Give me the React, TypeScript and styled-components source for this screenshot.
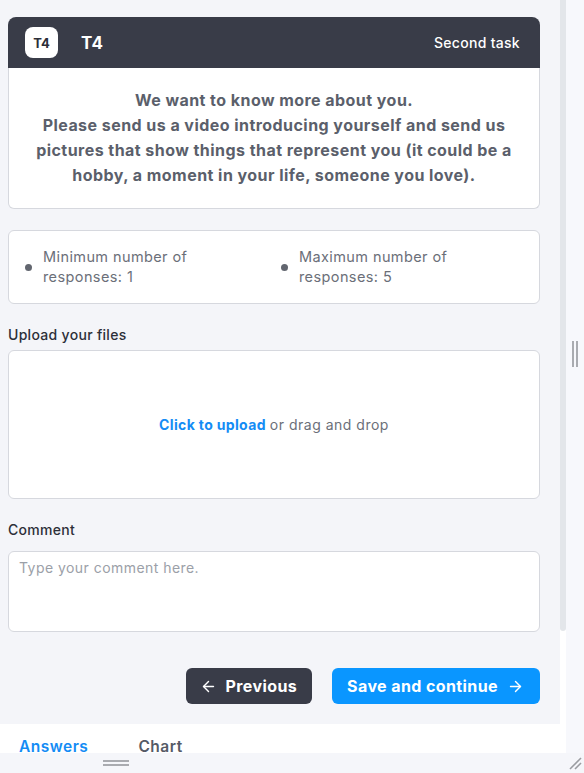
import React from "react";
import styled, { createGlobalStyle } from "styled-components";
import { ArrowLeft, ArrowRight } from "lucide-react";

const GlobalStyle = createGlobalStyle`
  html, body { margin: 0; padding: 0; }
  body {
    background: #f4f5f9;
    font-family: Inter, "Open Sans", "Noto Sans", sans-serif;
    color: #2c2f38;
  }
  * { box-sizing: border-box; }
`;

const Frame = styled.div`
  width: 584px;
  height: 773px;
  display: grid;
  grid-template-columns: 566px 18px;
  grid-template-rows: 753px 20px;
  overflow: hidden;
  background: #f4f5f9;
`;

const LeftPane = styled.div`
  display: flex;
  flex-direction: column;
  min-height: 0;
  overflow: hidden;
`;

const ScrollArea = styled.div`
  flex: 1;
  display: flex;
  min-height: 0;
  overflow: hidden;
`;

const Content = styled.div`
  width: 560px;
  padding: 17px 20px 0 8px;
  display: flex;
  flex-direction: column;
  background: #f4f5f9;
`;

const ScrollTrack = styled.div`
  width: 6px;
  background: #ffffff;
  display: flex;
  flex-direction: column;
`;

const ScrollThumb = styled.div`
  height: 631px;
  background: #e3e6ea;
  border-radius: 0 0 3px 3px;
`;

const Card = styled.section`
  display: flex;
  flex-direction: column;
`;

const CardHeader = styled.header`
  height: 51px;
  background: #393c48;
  border-radius: 8px 8px 0 0;
  display: flex;
  align-items: center;
  padding: 0 20px 0 17px;
`;

const Badge = styled.span`
  width: 33px;
  height: 31px;
  border-radius: 8px;
  background: #ffffff;
  color: #2b2e38;
  font-weight: 700;
  font-size: 13px;
  display: flex;
  align-items: center;
  justify-content: center;
`;

const HeaderTitle = styled.h2`
  margin: 0 0 0 23px;
  font-size: 17px;
  font-weight: 700;
  letter-spacing: 0.3px;
  color: #ffffff;
  flex: 1;
`;

const HeaderMeta = styled.span`
  font-size: 14px;
  font-weight: 500;
  letter-spacing: 0.3px;
  color: #ffffff;
`;

const CardBody = styled.div`
  background: #ffffff;
  border: 1px solid #d6d8de;
  border-top: none;
  border-radius: 0 0 6px 6px;
  padding: 20px 12px;
  text-align: center;
  font-size: 16px;
  line-height: 25px;
  letter-spacing: 0.45px;
  font-weight: 700;
  color: #5b5f6b;
  white-space: nowrap;
`;

const InfoBox = styled.div`
  margin-top: 21px;
  background: #ffffff;
  border: 1px solid #d6d8de;
  border-radius: 6px;
  padding: 16px 14px;
  display: grid;
  grid-template-columns: 256px 256px;
`;

const InfoItem = styled.div`
  display: flex;
  align-items: center;
  gap: 11px;
  padding-left: 2px;
`;

const Dot = styled.span`
  width: 7px;
  height: 7px;
  border-radius: 50%;
  background: #62666f;
  flex-shrink: 0;
`;

const InfoText = styled.span`
  font-size: 14.5px;
  line-height: 20px;
  letter-spacing: 0.4px;
  color: #6b6f79;
  max-width: 168px;
`;

const FieldLabel = styled.label<{ $top: number; $gap: number }>`
  display: block;
  margin-top: ${(p) => p.$top}px;
  margin-bottom: ${(p) => p.$gap}px;
  font-size: 14px;
  line-height: 20px;
  font-weight: 450;
  letter-spacing: 0.3px;
  color: #2c2f38;
`;

const DropZone = styled.div`
  height: 149px;
  background: #ffffff;
  border: 1px solid #d6d8de;
  border-radius: 6px;
  display: flex;
  align-items: center;
  justify-content: center;
  font-size: 14px;
  letter-spacing: 0.5px;
  color: #6b6f79;
`;

const UploadLink = styled.span`
  color: #148cf5;
  font-weight: 700;
  letter-spacing: 0.35px;
  margin-right: 4px;
`;

const CommentBox = styled.textarea`
  display: block;
  width: 100%;
  height: 81px;
  resize: none;
  background: #ffffff;
  border: 1px solid #d6d8de;
  border-radius: 6px;
  padding: 6px 10px;
  font-family: inherit;
  font-size: 14px;
  letter-spacing: 0.45px;
  line-height: 20px;
  color: #2c2f38;
  &::placeholder { color: #9ba0a8; }
`;

const Actions = styled.div`
  margin-top: 36px;
  display: flex;
  justify-content: flex-end;
  gap: 20px;
`;

const Button = styled.button<{ $variant: "dark" | "primary" }>`
  height: 36px;
  border: none;
  border-radius: 6px;
  display: flex;
  align-items: center;
  gap: 9px;
  padding: ${(p) => (p.$variant === "dark" ? "0 15px 0 14px" : "0 16px 0 15px")};
  background: ${(p) => (p.$variant === "dark" ? "#393c48" : "#0a96ff")};
  color: #ffffff;
  font-family: inherit;
  font-size: 16px;
  letter-spacing: 0.4px;
  font-weight: 700;
  cursor: pointer;
`;

const TabBar = styled.nav`
  height: 29px;
  background: #ffffff;
  display: flex;
  gap: 50px;
  padding: 13px 0 0 19px;
  overflow: hidden;
`;

const Tab = styled.span<{ $active?: boolean }>`
  font-size: 15.5px;
  line-height: 20px;
  letter-spacing: 0.5px;
  font-weight: 600;
  color: ${(p) => (p.$active ? "#148cf5" : "#555a66")};
`;

const SideSplitter = styled.div`
  background: #f7f8fc;
  display: flex;
  justify-content: center;
  padding-top: 341px;
`;

const BottomSplitter = styled.div`
  grid-column: 1 / 3;
  background: #f5f6fa;
  display: flex;
  align-items: center;
  justify-content: space-between;
  padding: 0 2px 0 103px;
`;

export default function App() {
  return (
    <>
      <GlobalStyle />
      <Frame>
        <LeftPane>
          <ScrollArea>
            <Content>
              <Card>
                <CardHeader>
                  <Badge>T4</Badge>
                  <HeaderTitle>T4</HeaderTitle>
                  <HeaderMeta>Second task</HeaderMeta>
                </CardHeader>
                <CardBody>
                  We want to know more about you.
                  <br />
                  Please send us a video introducing yourself and send us
                  <br />
                  pictures that show things that represent you (it could be a
                  <br />
                  hobby, a moment in your life, someone you love).
                </CardBody>
              </Card>

              <InfoBox>
                <InfoItem>
                  <Dot />
                  <InfoText>Minimum number of responses: 1</InfoText>
                </InfoItem>
                <InfoItem>
                  <Dot />
                  <InfoText>Maximum number of responses: 5</InfoText>
                </InfoItem>
              </InfoBox>

              <FieldLabel $top={21} $gap={5}>Upload your files</FieldLabel>
              <DropZone>
                <UploadLink>Click to upload</UploadLink>or drag and drop
              </DropZone>

              <FieldLabel $top={21} $gap={11}>Comment</FieldLabel>
              <CommentBox placeholder="Type your comment here." />

              <Actions>
                <Button $variant="dark">
                  <ArrowLeft size={17} strokeWidth={2} />
                  Previous
                </Button>
                <Button $variant="primary">
                  Save and continue
                  <ArrowRight size={17} strokeWidth={2} />
                </Button>
              </Actions>
            </Content>
            <ScrollTrack>
              <ScrollThumb />
            </ScrollTrack>
          </ScrollArea>
          <TabBar>
            <Tab $active>Answers</Tab>
            <Tab>Chart</Tab>
          </TabBar>
        </LeftPane>

        <SideSplitter>
          <svg width="8" height="26" viewBox="0 0 8 26">
            <rect x="1" y="0" width="2" height="26" fill="#a9abb0" />
            <rect x="5" y="0" width="2" height="26" fill="#a9abb0" />
          </svg>
        </SideSplitter>

        <BottomSplitter>
          <svg width="26" height="8" viewBox="0 0 26 8">
            <rect x="0" y="1" width="26" height="2" fill="#a9abb0" />
            <rect x="0" y="5" width="26" height="2" fill="#a9abb0" />
          </svg>
          <svg width="14" height="14" viewBox="0 0 14 14">
            <line x1="2" y1="13" x2="13" y2="2" stroke="#9a9ca1" strokeWidth="1.6" />
            <line x1="7" y1="13" x2="13" y2="7" stroke="#9a9ca1" strokeWidth="1.6" />
          </svg>
        </BottomSplitter>
      </Frame>
    </>
  );
}
